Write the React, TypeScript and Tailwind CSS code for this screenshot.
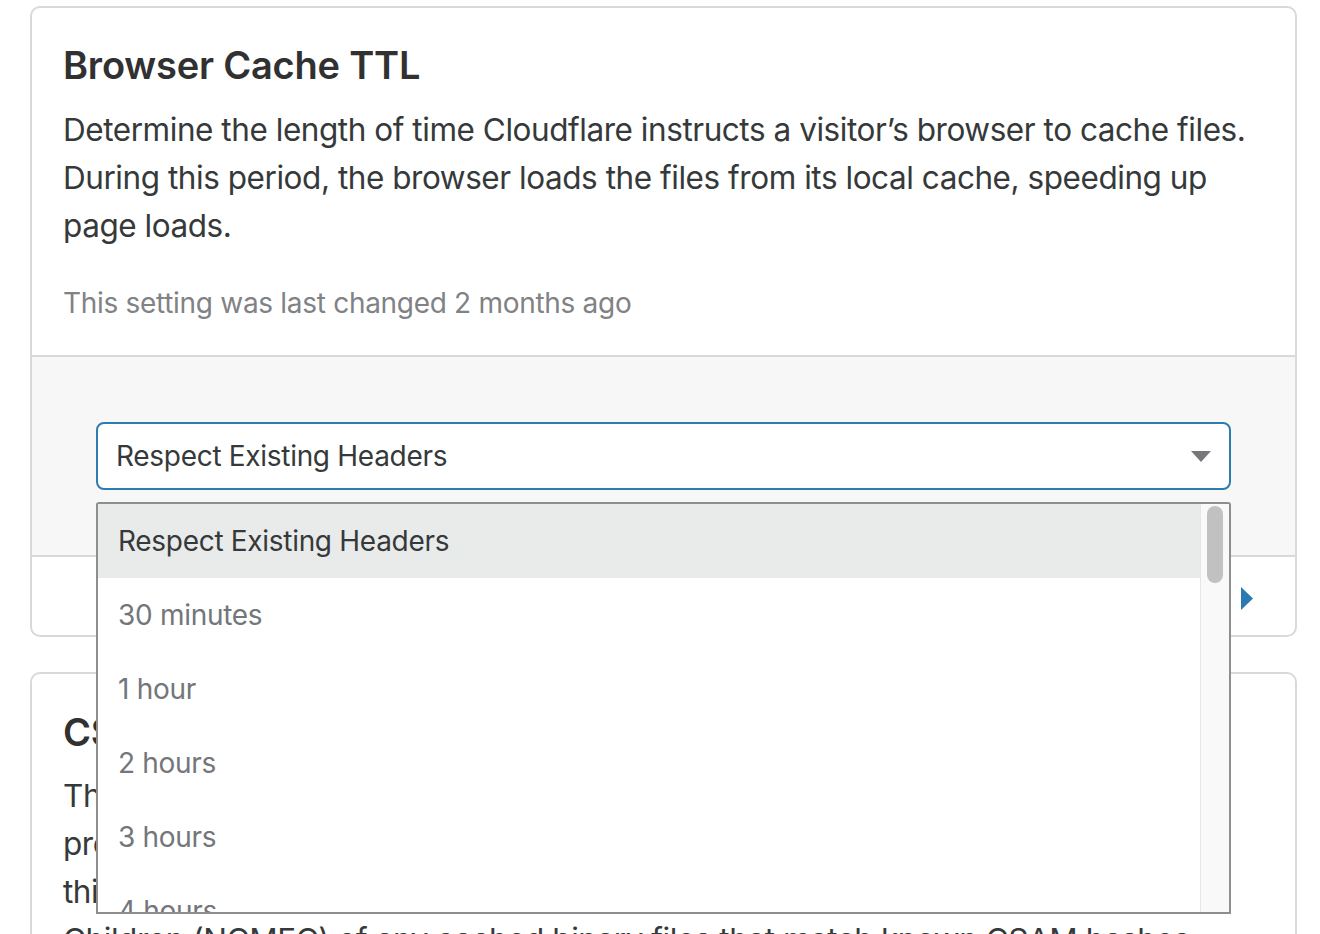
import React from "react";

const options = [
    "Respect Existing Headers",
    "30 minutes",
    "1 hour",
    "2 hours",
    "3 hours",
    "4 hours",
    "5 hours",
];

function Caret() {
    return (
        <svg width="20" height="11" viewBox="0 0 20 11">
            <path d="M0 0 L20 0 L10 11 Z" fill="#76787b" />
        </svg>
    );
}

function Dropdown() {
    return (
        <div className="absolute left-0 right-0 top-[80px] z-10 h-[412px] flex bg-white border-2 border-[#8c8e91] rounded-tl-[3px] rounded-tr-[3px] overflow-hidden">
            <ul className="flex-1 flex flex-col">
                {options.map((opt, i) => (
                    <li
                        key={opt}
                        className={
                            i === 0
                                ? "h-[74px] shrink-0 flex items-center pl-[20px] bg-[#e9ebea] text-[#36393a] tracking-[-0.3px]"
                                : "h-[74px] shrink-0 flex items-center pl-[20px] text-[#73767a] tracking-[-0.3px]"
                        }
                    >
                        {opt}
                    </li>
                ))}
            </ul>
            <div className="w-[29px] shrink-0 bg-[#f9f9f9] border-l border-[#e6e6e6] pt-[2px] flex justify-center">
                <div className="w-[16px] h-[77px] rounded-full bg-[#c1c1c1]" />
            </div>
        </div>
    );
}

export default function App() {
    return (
        <div
            className="bg-white min-h-screen pt-[6px] pl-[30px] pb-[40px] text-[28px] leading-[48px] text-[#36393a]"
            style={{ fontFamily: "Inter, 'Noto Sans', 'Liberation Sans', sans-serif" }}
        >
            <div className="w-[1267px] flex flex-col gap-[35px]">
                <section className="border-2 border-[#d9d9d9] rounded-[10px] bg-white">
                    <div className="px-[31px] pt-[33px] pb-[28px]">
                        <h2 className="text-[38px] leading-[48px] font-semibold text-[#313131] tracking-[-0.2px]">
                            Browser Cache TTL
                        </h2>
                        <p className="mt-[17px] text-[31.5px] leading-[48px] tracking-[-0.45px]">
                            Determine the length of time Cloudflare instructs a visitor’s browser to cache files.
                            During this period, the browser loads the files from its local cache, speeding up
                            page loads.
                        </p>
                        <p className="mt-[29px] text-[#808285] tracking-[-0.3px]">
                            This setting was last changed 2 months ago
                        </p>
                    </div>
                    <div className="border-t-2 border-[#d9d9d9] bg-[#f7f7f7] px-[64px] py-[65px]">
                        <div className="relative">
                            <div className="h-[68px] bg-white border-2 border-[#2c7cb0] rounded-[8px] pl-[18px] pr-[18px] flex items-center justify-between">
                                <span className="tracking-[-0.3px]">Respect Existing Headers</span>
                                <Caret />
                            </div>
                            <Dropdown />
                        </div>
                    </div>
                    <div className="border-t-2 border-[#d9d9d9] h-[80px] flex items-center justify-end pr-[42px] pt-[5px]">
                        <svg width="12" height="23" viewBox="0 0 12 23">
                            <path d="M0 0 L12 11.5 L0 23 Z" fill="#2b7bb2" />
                        </svg>
                    </div>
                </section>

                <section className="border-2 border-[#d9d9d9] rounded-[10px] bg-white">
                    <div className="px-[31px] pt-[34px] pb-[28px]">
                        <h2 className="text-[38px] leading-[48px] font-semibold text-[#313131] tracking-[-0.2px]">
                            CSAM Scanning Tool
                        </h2>
                        <p className="mt-[16px] text-[31.5px] leading-[48px] tracking-[-0.45px]">
                            The CSAM Scanning Tool helps find child sexual abuse material and report it to
                            <br />
                            protect users. When on, Cloudflare compares content served from its cache
                            <br />
                            this site to lists and alerts the National Center for Missing and Exploited
                            <br />
                            Children (NCMEC) of any cached binary files that match known CSAM hashes.
                        </p>
                        <p className="mt-[29px] text-[#808285] tracking-[-0.3px]">
                            This setting was last changed 5 months ago
                        </p>
                    </div>
                </section>
            </div>
        </div>
    );
}
